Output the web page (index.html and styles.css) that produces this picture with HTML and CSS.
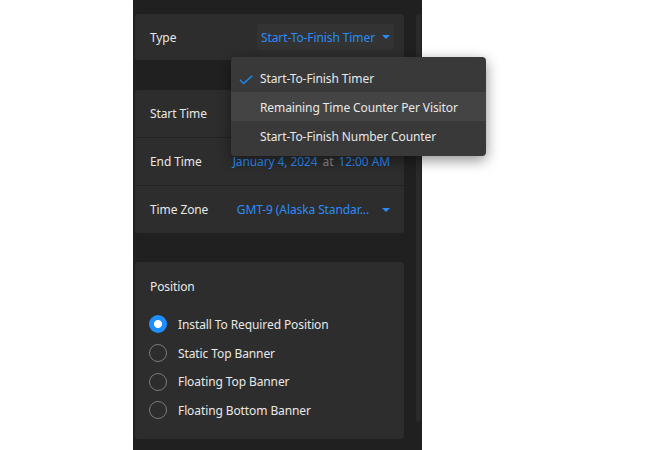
FILE: index.html
```html
<!DOCTYPE html>
<html>
<head>
<meta charset="utf-8">
<link rel="stylesheet" href="styles.css">
</head>
<body>
<div class="panel">
  <div class="column">
    <div class="card card-type">
      <div class="row">
        <span class="label">Type</span>
        <span class="select">Start-To-Finish Timer <span class="caret"></span></span>
      </div>
    </div>

    <div class="card card-time">
      <div class="row row-line">
        <span class="label">Start Time</span>
      </div>
      <div class="row row-line">
        <span class="label">End Time</span>
        <span class="value"><span class="blue">January 4, 2024</span> <span class="muted">at</span> <span class="blue">12:00 AM</span></span>
      </div>
      <div class="row">
        <span class="label">Time Zone</span>
        <span class="value tz"><span class="blue">GMT-9 (Alaska Standar...</span> <span class="caret"></span></span>
      </div>
    </div>

    <div class="card card-pos">
      <div class="pos-title">Position</div>
      <div class="radios">
        <div class="radio-row"><span class="radio on"></span><span>Install To Required Position</span></div>
        <div class="radio-row"><span class="radio"></span><span>Static Top Banner</span></div>
        <div class="radio-row"><span class="radio"></span><span>Floating Top Banner</span></div>
        <div class="radio-row"><span class="radio"></span><span>Floating Bottom Banner</span></div>
      </div>
    </div>
  </div>
  <div class="scrollbar"></div>

  <div class="menu">
    <div class="item"><svg class="check" width="14" height="10" viewBox="0 0 14 10"><polyline points="0.8,4.6 4.6,8.6 13.2,0.8" fill="none" stroke="#1e8fff" stroke-width="1.3"/></svg>Start-To-Finish Timer</div>
    <div class="item hover">Remaining Time Counter Per Visitor</div>
    <div class="item">Start-To-Finish Number Counter</div>
  </div>
</div>
</body>
</html>
```

FILE: styles.css
```css
html, body {
  margin: 0;
  padding: 0;
  background: #ffffff;
}
body {
  font-family: "Noto Sans", "Open Sans", sans-serif;
  font-size: 12px;
  letter-spacing: -0.1px;
  color: #e6e6e6;
}
.panel {
  position: relative;
  margin-left: 133px;
  width: 289px;
  height: 450px;
  background: #202020;
  box-sizing: border-box;
  padding: 14px 0 0 2px;
  display: flex;
  align-items: flex-start;
}
.column {
  width: 269px;
  display: flex;
  flex-direction: column;
}
.scrollbar {
  margin-left: 12px;
  width: 5px;
  height: 408px;
  border-radius: 3px;
  background: #2a2a2a;
}
.card {
  background: #2d2d2d;
  border-radius: 3px;
}
.card-time {
  margin-top: 30px;
}
.card-pos {
  margin-top: 29px;
  padding: 15px 0 14px 0;
}
.row {
  height: 46px;
  display: flex;
  align-items: center;
  justify-content: space-between;
  padding: 0 14px 0 15px;
}
.card-time .row {
  height: 47px;
}
.row-line {
  border-bottom: 1px solid #222222;
}
.card-type .row {
  padding-right: 10px;
}
.label {
  color: #e8e8e8;
  white-space: nowrap;
}
.select {
  height: 26px;
  display: flex;
  align-items: center;
  padding: 0 4px 0 4px;
  border-radius: 3px;
  background: #333333;
  color: #2a8cf7;
  white-space: nowrap;
}
.caret {
  display: inline-block;
  width: 0;
  height: 0;
  margin-left: 7px;
  border-left: 4px solid transparent;
  border-right: 4px solid transparent;
  border-top: 4px solid #2a8cf7;
}
.value {
  white-space: nowrap;
  display: flex;
  align-items: center;
  gap: 5px;
}
.tz {
  gap: 6px;
}
.blue {
  color: #2a8cf7;
}
.muted {
  color: #8a8a8a;
}
.pos-title {
  padding-left: 15px;
  line-height: 20px;
  color: #e8e8e8;
}
.radios {
  margin-top: 13px;
  display: flex;
  flex-direction: column;
}
.radio-row {
  height: 28.7px;
  display: flex;
  align-items: center;
  padding-left: 14px;
  gap: 11px;
  color: #e8e8e8;
}
.radio {
  width: 18px;
  height: 18px;
  box-sizing: border-box;
  border-radius: 50%;
  border: 1.5px solid #7a7a7a;
  flex: none;
}
.radio.on {
  border: none;
  background: radial-gradient(circle, #ffffff 0 3.6px, #1e8fff 4.4px);
}
.menu {
  position: absolute;
  left: 98px;
  top: 57px;
  width: 255px;
  box-sizing: border-box;
  padding: 6px 0;
  background: #393939;
  border-radius: 4px;
  box-shadow: 0 4px 14px rgba(0, 0, 0, 0.45);
}
.item {
  position: relative;
  height: 29px;
  box-sizing: border-box;
  padding-top: 2px;
  display: flex;
  align-items: center;
  padding-left: 29px;
  color: #e8e8e8;
  white-space: nowrap;
}
.item.hover {
  background: #444444;
}
.check {
  position: absolute;
  left: 8px;
  top: 12px;
}
```
